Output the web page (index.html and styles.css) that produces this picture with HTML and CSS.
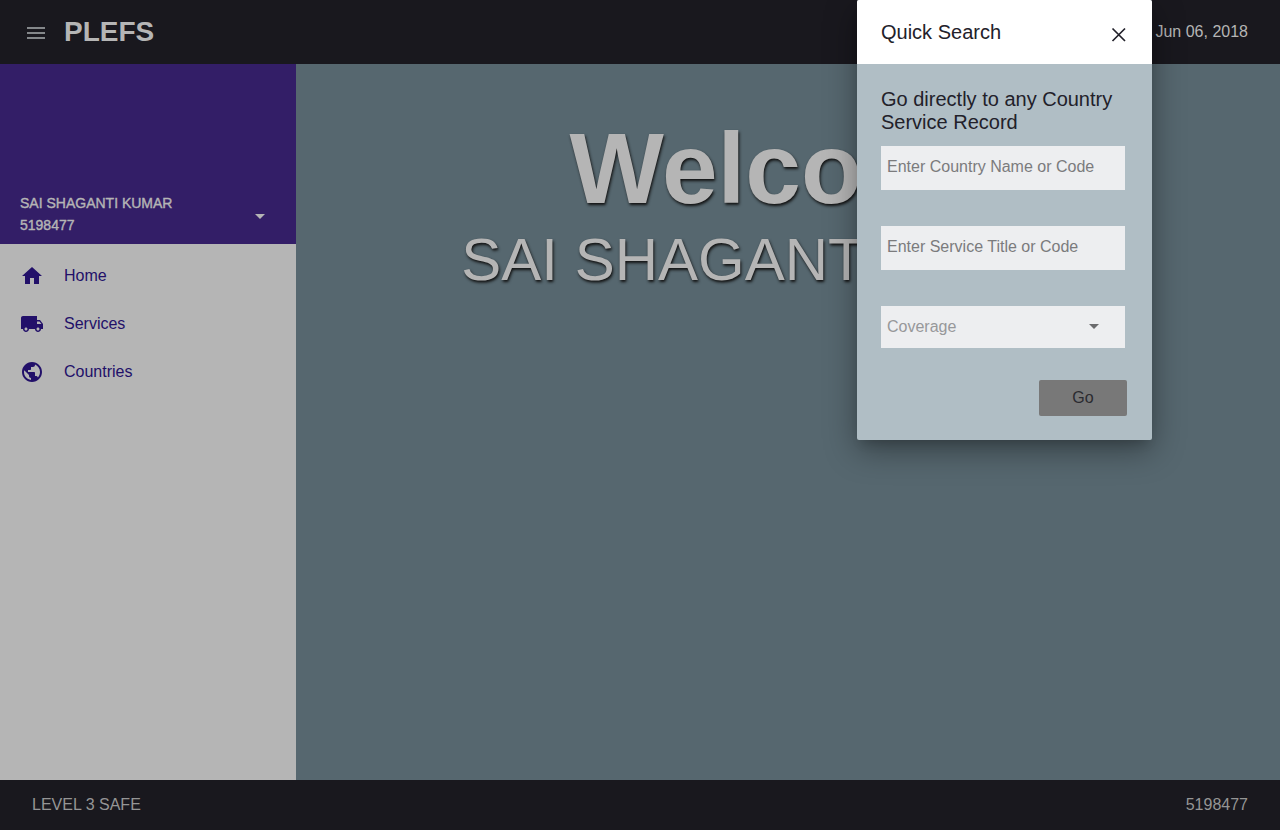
FILE: index.html
```html
<!DOCTYPE html>
<html lang="en">
<head>
<meta charset="utf-8">
<title>PLEFS</title>
<link rel="stylesheet" href="styles.css">
</head>
<body class="app">
<header class="topbar">
  <button class="menu-button" type="button" aria-label="Menu">
    <svg width="24" height="24" viewBox="0 0 24 24"><path d="M3 18h18v-2H3v2zm0-5h18v-2H3v2zm0-7v2h18V6H3z"/></svg>
  </button>
  <h1 class="brand">PLEFS</h1>
  <time class="date" datetime="2018-06-06">Jun 06, 2018</time>
</header>
<div class="body">
  <aside class="sidebar">
    <div class="profile">
      <div class="profile-text">
        <div>SAI SHAGANTI KUMAR</div>
        <div>5198477</div>
      </div>
      <button class="profile-toggle" type="button" aria-label="Account options">
        <svg width="24" height="24" viewBox="0 0 24 24"><path d="M7 10l5 5 5-5z"/></svg>
      </button>
    </div>
    <nav class="nav">
      <a class="nav-link" href="#home">
        <svg width="24" height="24" viewBox="0 0 24 24"><path d="M10 20v-6h4v6h5v-8h3L12 3 2 12h3v8z"/></svg>
        <span>Home</span>
      </a>
      <a class="nav-link" href="#services">
        <svg width="24" height="24" viewBox="0 0 24 24"><path d="M20 8h-3V4H3c-1.100 0-2 .9-2 2v11h2c0 1.660 1.340 3 3 3s3-1.340 3-3h6c0 1.660 1.340 3 3 3s3-1.340 3-3h2v-5l-3-4zM6 18.500c-.83 0-1.500-.67-1.500-1.500s.67-1.500 1.500-1.500 1.500.67 1.500 1.500-.67 1.500-1.500 1.500zm13.500-9l1.960 2.500H17V9.500h2.500zm-1.500 9c-.83 0-1.500-.67-1.500-1.500s.67-1.500 1.500-1.500 1.500.67 1.500 1.500-.67 1.500-1.500 1.500z"/></svg>
        <span>Services</span>
      </a>
      <a class="nav-link" href="#countries">
        <svg width="24" height="24" viewBox="0 0 24 24"><path d="M12 2C6.480 2 2 6.480 2 12s4.480 10 10 10 10-4.480 10-10S17.520 2 12 2zm-1 17.930c-3.950-.49-7-3.850-7-7.930 0-.62.080-1.210.21-1.790L9 15v1c0 1.100.9 2 2 2v1.930zm6.900-2.540c-.26-.81-1-1.390-1.900-1.390h-1v-3c0-.55-.45-1-1-1H8v-2h2c.55 0 1-.45 1-1V7h2c1.100 0 2-.9 2-2v-.41c2.930 1.190 5 4.060 5 7.410 0 2.080-.8 3.970-2.100 5.390z"/></svg>
        <span>Countries</span>
      </a>
    </nav>
  </aside>
  <main class="content">
    <h2 class="welcome">Welcome</h2>
    <p class="user-name">SAI SHAGANTI KUMAR</p>
  </main>
</div>
<footer class="footer">
  <span>LEVEL 3 SAFE</span>
  <span>5198477</span>
</footer>

<section class="dialog" role="dialog" aria-labelledby="dialog-title">
  <div class="dialog-head">
    <h2 class="dialog-title" id="dialog-title">Quick Search</h2>
    <button class="close-button" type="button" aria-label="Close">
      <svg width="24" height="24" viewBox="0 0 24 24"><path d="M5.500 5.500l12.500 12.500M18 5.500L5.500 18" fill="none" stroke="currentColor" stroke-width="1.700"/></svg>
    </button>
  </div>
  <form class="dialog-form">
    <h3 class="form-title">Go directly to any Country Service Record</h3>
    <input class="field" type="text" placeholder="Enter Country Name or Code" aria-label="Country name or code">
    <input class="field" type="text" placeholder="Enter Service Title or Code" aria-label="Service title or code">
    <div class="select-wrap">
      <select class="field field-select" aria-label="Coverage">
        <option>Coverage</option>
      </select>
      <svg class="select-arrow" width="10" height="5" viewBox="0 0 10 5"><path d="M0 0l5 5 5-5z"/></svg>
    </div>
    <button class="go-button" type="button">Go</button>
  </form>
</section>
</body>
</html>
```
FILE: styles.css
```css
* {
  box-sizing: border-box;
}

.app {
  display: flex;
  flex-direction: column;
  min-height: 100vh;
  margin: 0;
  position: relative;
  font-family: "Liberation Sans", Arial, sans-serif;
  font-size: 16px;
  background: #56676f;
}

h1, h2, h3, p {
  margin: 0;
}

button {
  padding: 0;
  border: 0;
  background: none;
  color: inherit;
  font: inherit;
  cursor: pointer;
}

svg {
  display: block;
  fill: currentColor;
}

.topbar {
  display: flex;
  align-items: center;
  height: 64px;
  padding: 0 32px 0 24px;
  background: #19181e;
  color: #b5b5b5;
}

.menu-button {
  padding-top: 2px;
  color: #84878a;
}

.brand {
  margin-left: 16px;
  font-size: 28px;
  line-height: 32px;
}

.date {
  margin-left: auto;
}

.body {
  display: flex;
  flex: 1;
}

.sidebar {
  width: 296px;
  flex: none;
  background: #b5b5b5;
}

.profile {
  display: flex;
  align-items: flex-end;
  justify-content: space-between;
  height: 180px;
  padding: 0 24px 8px 20px;
  background: #331e67;
  color: #b5b5b5;
}

.profile-text {
  font-size: 14px;
  line-height: 22px;
  -webkit-text-stroke: 0.4px currentColor;
}

.profile-toggle {
  padding-bottom: 8px;
}

.nav {
  padding-top: 8px;
}

.nav-link {
  display: flex;
  align-items: center;
  gap: 20px;
  height: 48px;
  padding: 0 20px;
  color: #221069;
  text-decoration: none;
}

.nav-link span {
  padding-bottom: 1px;
}

.content {
  flex: 1;
  padding-top: 47px;
  text-align: center;
  color: #b5b5b5;
  text-shadow: 1px 2px 3px #111;
  white-space: nowrap;
  overflow: hidden;
}

.welcome {
  font-size: 100px;
  line-height: 114px;
}

.user-name {
  font-size: 60px;
  line-height: 70px;
}

.footer {
  display: flex;
  align-items: center;
  justify-content: space-between;
  height: 50px;
  padding: 0 32px;
  background: #19181e;
  color: #959595;
}

.dialog {
  position: absolute;
  top: 0;
  right: 128px;
  width: 295px;
  border-radius: 2px;
  overflow: hidden;
  background: #b0bec5;
  color: #22212a;
  box-shadow: 0 8px 10px -5px rgba(0, 0, 0, 0.15),
    0 10px 32px rgba(0, 0, 0, 0.38);
}

.dialog-head {
  display: flex;
  align-items: center;
  justify-content: space-between;
  height: 64px;
  padding: 0 21px 0 24px;
  background: #fff;
}

.dialog-title {
  font-size: 20px;
  font-weight: 400;
}

.close-button {
  padding-top: 6px;
}

.dialog-form {
  display: flex;
  flex-direction: column;
  padding: 24px 27px 24px 24px;
}

.form-title {
  margin: 0 -3px 12px 0;
  font-size: 20px;
  font-weight: 400;
  line-height: 23px;
}

.field {
  width: 100%;
  height: 44px;
  margin: 0 0 36px;
  padding: 0 6px 2px;
  border: 0;
  border-radius: 0;
  background: #edeef0;
  color: #22212a;
  font: inherit;
}

.field::placeholder {
  color: #7b7b7d;
  opacity: 1;
}

.select-wrap {
  position: relative;
  margin-bottom: 32px;
}

.field-select {
  display: block;
  height: 42px;
  margin: 0;
  appearance: none;
  color: #97989a;
}

.select-arrow {
  position: absolute;
  top: 18px;
  right: 26px;
  color: #6b6b6d;
  pointer-events: none;
}

.go-button {
  align-self: flex-end;
  width: 88px;
  height: 36px;
  margin-right: -2px;
  border-radius: 2px;
  background: #787878;
  color: #2b2b30;
}
```
